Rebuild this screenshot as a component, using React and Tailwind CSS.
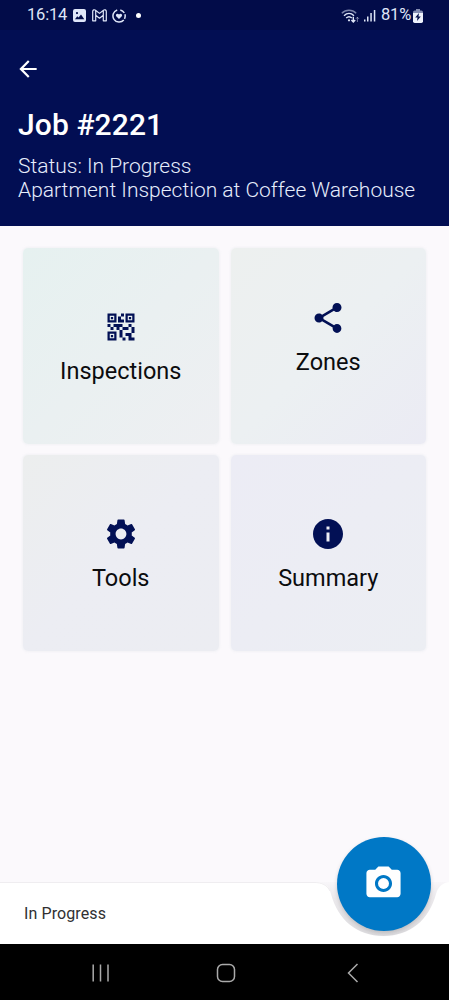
import {
  MdArrowBack,
  MdCameraAlt,
  MdInfo,
  MdQrCode2,
  MdSettings,
  MdShare,
} from "react-icons/md";

const tiles = [
  { label: "Inspections", Icon: MdQrCode2, tone: "from-[#e6f1f0] to-[#eeeff2] pt-[61px]" },
  { label: "Zones", Icon: MdShare, tone: "from-[#edf0ef] via-[#ecf0f2] to-[#ebebf4] pt-[52px]" },
  { label: "Tools", Icon: MdSettings, tone: "from-[#eceeee] via-[#ecedf3] to-[#ecedf2] pt-[61px]" },
  { label: "Summary", Icon: MdInfo, tone: "from-[#ececf5] to-[#eceef3] pt-[61px]" },
];

function StatusBar() {
  return (
    <div className="flex h-[30px] items-center bg-[#020c49] pl-[27px] pr-[26px] pt-px text-[16.5px] text-[#dfe6f8]">
      <span className="w-[46px] tracking-[-0.2px]">16:14</span>
      <svg className="h-[13px] w-[13px]" viewBox="0 0 13 13" fill="currentColor">
        <path fillRule="evenodd" d="M2 0h9a2 2 0 0 1 2 2v9a2 2 0 0 1-2 2H2a2 2 0 0 1-2-2V2a2 2 0 0 1 2-2Zm0 10.2h9.3L8 5.6l-2.4 3-1.4-1.4L2 10.2ZM4 3a1.1 1.1 0 1 0 0 2.2A1.1 1.1 0 0 0 4 3Z" />
      </svg>
      <svg className="ml-[6px] h-[13px] w-[15px]" viewBox="0 0 15 13" fill="none" stroke="currentColor" strokeWidth="1.2" strokeLinejoin="round">
        <path d="M.7 2.5C.7.8 2.400.3 3.500 1.200l4 3.200 4-3.200c1.100-.9 2.800-.4 2.800 1.300v9.300h-3V6.200L7.500 9.200 3.700 6.200v5.600h-3ZM3.700 1.500v4.700M11.300 1.500v4.700" />
      </svg>
      <svg className="ml-[5px] h-[14px] w-[14px]" viewBox="0 0 14 14" fill="none" stroke="currentColor" strokeWidth="1.5">
        <path d="M5.200 1A6.200 6.200 0 1 0 11.800 11M8.300.9a6.200 6.200 0 0 1 4 3M12.900 5.200a6.200 6.200 0 0 1-.4 4.600" />
        <path d="M7 10 4.200 7.200C3 5.500 5.600 3.700 7 5.600c1.400-1.900 4-.1 2.800 1.600Z" fill="currentColor" stroke="none" />
      </svg>
      <span className="ml-[10px] h-[5px] w-[5px] rounded-full bg-white" />
      <svg className="ml-auto h-[14px] w-[19px]" viewBox="0 0 19 14" fill="none" stroke="currentColor" strokeWidth="1.4">
        <path d="M.8 4.200c4-4 10.400-4 14.400 0" opacity=".55" />
        <path d="M3 6.700c3-2.900 7-2.900 10 0M5.200 9.100c1.700-1.600 3.900-1.600 5.600 0" />
        <circle cx="8" cy="11.3" r="1.1" fill="currentColor" stroke="none" />
        <path d="M12.300 7.800v5M10.400 11l1.900 2 1.900-2" />
        <path d="M16.400 13V8.300M14.900 9.800l1.500-1.600 1.500 1.600" strokeWidth="1" opacity=".5" />
      </svg>
      <svg className="ml-[4px] h-[13px] w-[12px]" viewBox="0 0 12 13" fill="currentColor">
        <rect x="0" y="10.5" width="1.5" height="2" />
        <rect x="3" y="7.5" width="1.5" height="5" />
        <rect x="6.3" y="4" width="1.5" height="8.5" />
        <rect x="9.8" y="1" width="1.5" height="11.5" />
      </svg>
      <span className="ml-[5px] mr-[2px] w-[30px] tracking-[-0.2px]">81%</span>
      <svg className="h-[14px] w-[10px]" viewBox="0 0 10 14">
        <path d="M3 0h4v1.500h1.300A1.700 1.700 0 0 1 10 3.200V5H0V3.200a1.700 1.700 0 0 1 1.700-1.700H3Z" fill="#838bb0" />
        <path d="M0 4h10v8.300A1.700 1.700 0 0 1 8.300 14H1.700A1.700 1.700 0 0 1 0 12.300Z" fill="#eef2fb" />
        <path d="M6 4 2.200 8.500h2.300L4 12l3.800-4.600H5.500Z" fill="#07104b" />
      </svg>
    </div>
  );
}

function Tile({ label, Icon, tone }) {
  return (
    <button className={`flex h-[196px] flex-col items-center rounded-[5px] bg-linear-to-br shadow-[0_0_3px_rgba(225,230,235,0.7)] ${tone}`}>
      <Icon className="h-9 w-9 text-[#021055]" />
      <span className="mt-[10px] text-[23.5px] leading-[32px] text-[#0b0c0e]">{label}</span>
    </button>
  );
}

export default function App() {
  return (
    <div className="flex h-[1000px] w-[449px] flex-col overflow-hidden bg-[#fbf9fc] font-['Roboto',sans-serif]">
      <header className="h-[225.5px] shrink-0 bg-[#020e53] text-white">
        <StatusBar />
        <div className="px-[18px]">
          <MdArrowBack className="-ml-[3px] mt-[26px] h-[26px] w-[26px]" />
          <h1 className="mt-[25px] text-[30px] font-medium leading-[36px] tracking-[0.1px]">Job #2221</h1>
          <div className="mt-[11px] whitespace-nowrap text-[21px] font-light leading-[24px] text-[#e6edfc]">
            <p>Status: In Progress</p>
            <p>Apartment Inspection at Coffee Warehouse</p>
          </div>
        </div>
      </header>

      <main className="grid flex-1 grid-cols-2 content-start gap-x-3 gap-y-[11px] px-[23px] pt-[22.5px]">
        {tiles.map((tile) => (
          <Tile key={tile.label} {...tile} />
        ))}
      </main>

      <footer className="relative flex h-[62px] shrink-0 items-center pl-[24px]">
        <svg className="absolute inset-0 h-[62px] w-[449px]" viewBox="0 0 449 62">
          <defs>
            <linearGradient id="notch" x1="0" y1="0" x2="0" y2="1">
              <stop offset="0" stopColor="#f8f6f9" />
              <stop offset="0.3" stopColor="#ebe9ec" />
              <stop offset="1" stopColor="#dddcdf" />
            </linearGradient>
          </defs>
          <rect y="0" width="449" height="62" fill="#fff" />
          <path d="M314 0C325 0 329 4 331 12C338 38 357 54 383.500 54S429 38 436 12C438 5 442 1 449 0Z" fill="url(#notch)" />
          <path d="M0 .5H314C322 .5 327 3 330 9" fill="none" stroke="#efedf0" />
        </svg>
        <span className="relative pt-[2px] text-[16px] tracking-[0.1px] text-[#303032]">In Progress</span>
        <button className="absolute left-[336.5px] top-[-45.5px] flex h-[94px] w-[94px] items-center justify-center rounded-full bg-[#0078c6] text-white shadow-[0_2px_4px_rgba(0,0,0,0.16)]">
          <MdCameraAlt className="h-[41px] w-[41px]" />
        </button>
      </footer>

      <nav className="flex h-14 shrink-0 items-center bg-black pl-[91px] pt-[2px] text-[#aaa]">
        <svg className="h-5 w-[19px]" viewBox="0 0 19 20" fill="none" stroke="currentColor" strokeWidth="1.5">
          <path d="M2.200 1.500v17M9.500 1.500v17M17 1.500v17" />
        </svg>
        <svg className="ml-[106px] h-5 w-5" viewBox="0 0 20 20" fill="none" stroke="currentColor" strokeWidth="1.5">
          <rect x="1.5" y="1.5" width="17" height="17" rx="5" />
        </svg>
        <svg className="ml-[111px] h-5 w-3" viewBox="0 0 12 20" fill="none" stroke="currentColor" strokeWidth="1.5">
          <path d="m10.500 1-9 9 9 9" />
        </svg>
      </nav>
    </div>
  );
}
